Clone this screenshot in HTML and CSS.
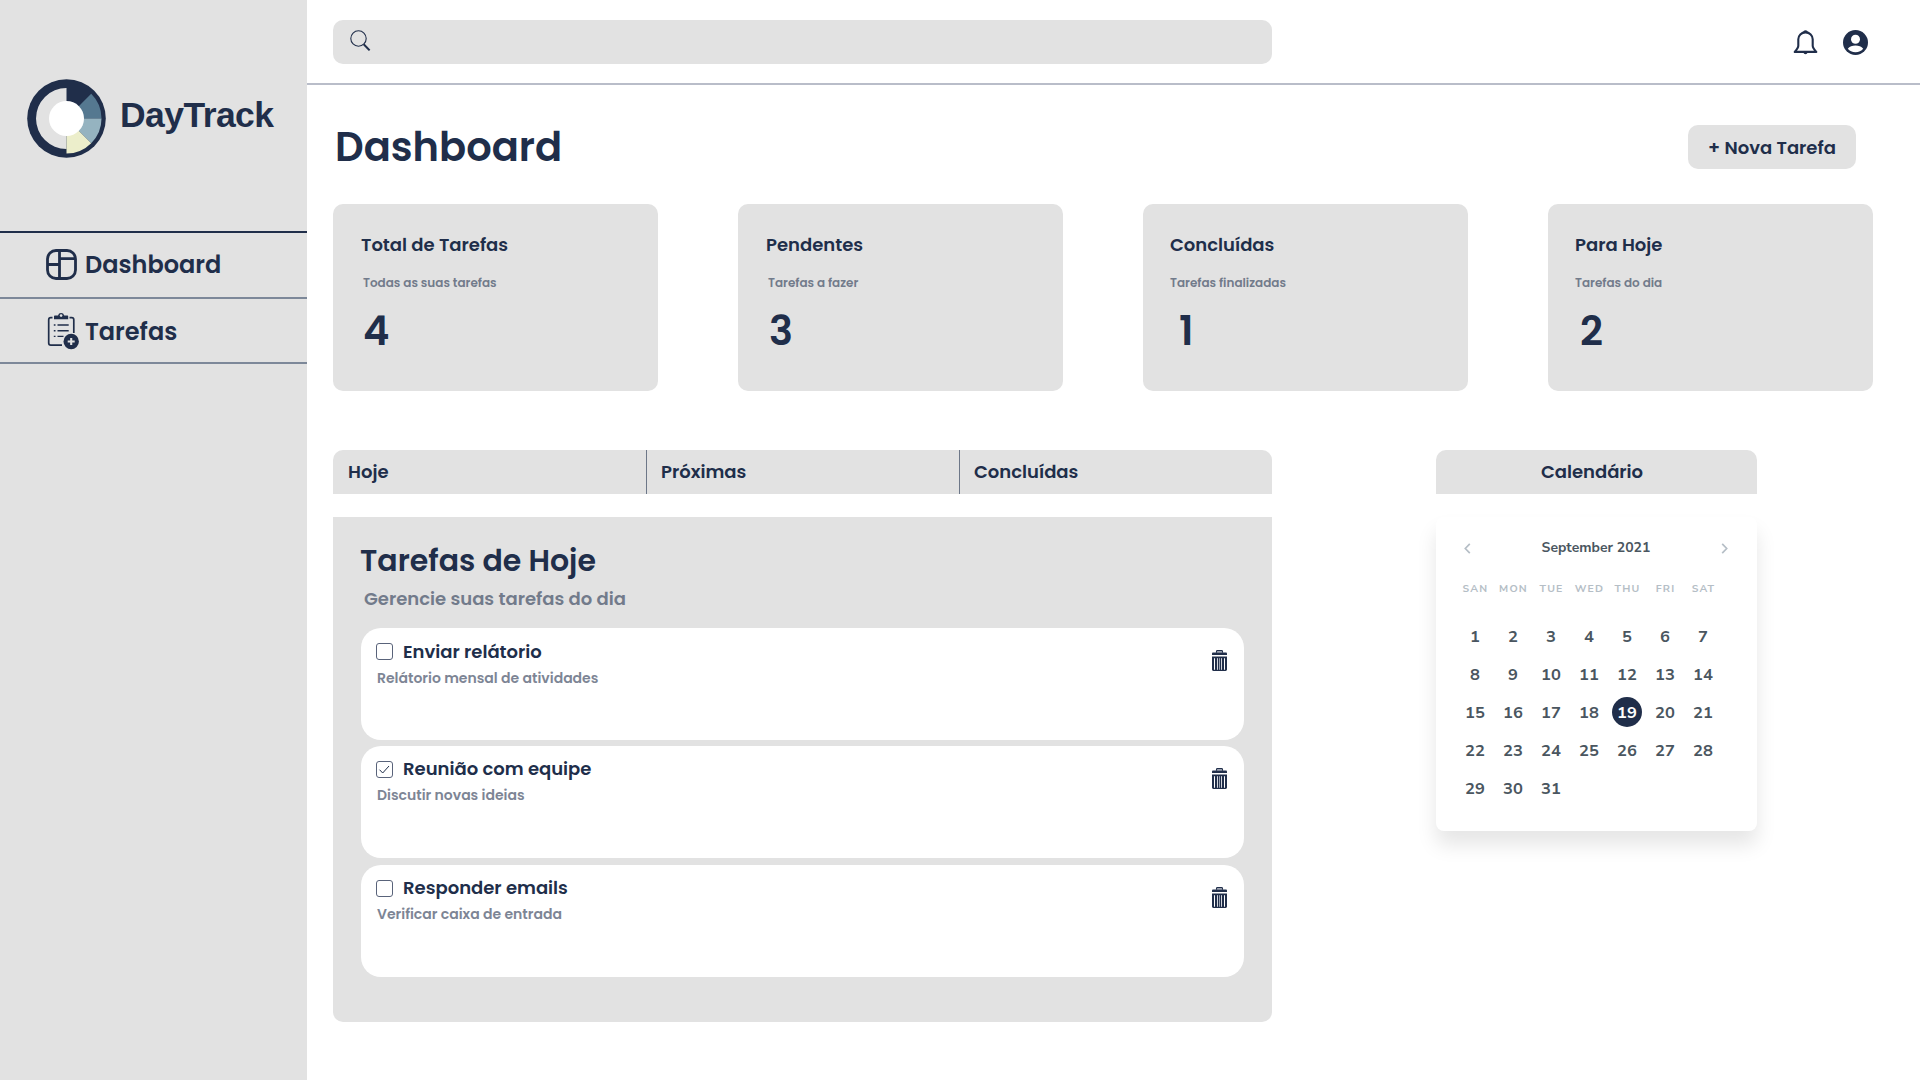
FILE: index.html
```
<!DOCTYPE html>
<html lang="pt-BR">
<head>
<meta charset="utf-8">
<title>DayTrack</title>
<link rel="stylesheet" href="styles.css">
</head>
<body>
<svg class="sprite" aria-hidden="true">
  <symbol id="trash" viewBox="0 0 15 21">
    <path d="M4.500 2.800V1.500c0-.5.4-.9.900-.9h4.200c.5 0 .9.400.9.900v1.300" fill="#c9cdd6" stroke="currentColor" stroke-width="1.100"/>
    <path d="M0 5V3.600c0-.7.500-1.200 1.200-1.200h12.600c.7 0 1.200.5 1.200 1.200V5z" fill="currentColor"/>
    <path fill-rule="evenodd" d="M0 6.500h15V19.600c0 .8-.6 1.400-1.400 1.400H1.400C.6 21 0 20.400 0 19.600zM2 8.200v11.600h1V8.200zM12 8.200v11.600h1V8.200z" fill="currentColor"/>
    <path d="M5.500 8.200v11.600M9.500 8.200v11.600" stroke="#d3d6dd" stroke-width="1"/>
    <path d="M7.500 8.200v11.600" stroke="#9aa1b0" stroke-width="1"/>
  </symbol>
</svg>
<div class="app">
  <aside class="sidebar">
    <div class="brand">
      <svg class="brand-mark" viewBox="-39.500 -39.500 79 79">
        <circle r="39.300" fill="#202e4a"/>
        <path d="M0-30.500A30.500 30.500 0 0 0 0 30.500z" fill="#e2e2e2"/>
        <path d="M0 0 24.700-24.700A35 35 0 0 1 35 0z" fill="#557890"/>
        <path d="M0 0H35A35 35 0 0 1 24.700 24.700z" fill="#95b3c0"/>
        <path d="M0 0 24.700 24.700A35 35 0 0 1 0 35z" fill="#eceecb"/>
        <circle r="17.500" fill="#fff"/>
      </svg>
      <span class="brand-name">DayTrack</span>
    </div>
    <nav class="menu">
      <a class="menu-item">
        <svg class="icon-dashboard" viewBox="0 0 31 31" fill="none" stroke="currentColor" stroke-width="2.800">
          <rect x="1.500" y="1.500" width="28" height="28" rx="8.500"/>
          <path d="M13.500 1.500v28M1.500 15.500h12M13.500 9.700h16"/>
        </svg>
        <span>Dashboard</span>
      </a>
      <a class="menu-item menu-item-tasks">
        <svg class="icon-tasks" viewBox="0 0 32 38" fill="none" stroke="currentColor">
          <path d="M5.500 5.700H3.800C2.600 5.700 1.700 6.600 1.700 7.800V31c0 1.200.9 2.100 2.100 2.100H15M22.500 5.700h2.200c1.200 0 2.100.9 2.100 2.100V21" stroke-width="1.700"/>
          <path d="M7 7.300V4.500c0-.6.5-1 1-1h3a3.200 3.200 0 0 1 6.200 0h3c.6 0 1 .4 1 1v2.800z" fill="currentColor" stroke="none"/>
          <circle cx="14.100" cy="3.600" r="1.300" fill="#e2e2e2" stroke="none"/>
          <path d="M10.500 13h11.200M10.500 18.700h11.200M10.500 24.400h6M6.800 13h1.700M6.800 18.700h1.700M6.800 24.400h1.700" stroke-width="1.400"/>
          <circle cx="24.200" cy="29.500" r="7.700" fill="currentColor" stroke="none"/>
          <path d="M24.200 26v7M20.700 29.500h7" stroke="#e2e2e2" stroke-width="2.100"/>
        </svg>
        <span>Tarefas</span>
      </a>
    </nav>
  </aside>

  <div class="content">
    <header class="topbar">
      <label class="search">
        <svg viewBox="0 0 21 22" fill="none" stroke="currentColor">
          <circle cx="8.500" cy="8.500" r="7.700" stroke-width="1.100"/>
          <path d="M13.700 14.200 19.600 20.400" stroke-width="2"/>
        </svg>
      </label>
      <div class="topbar-actions">
        <svg class="icon-bell" viewBox="0 0 25 25">
          <path d="M12.500 2.400c-4.200 0-7.200 3-7.200 6.900v6.500c0 1.600-1.300 3.600-3.600 6.100h21.600c-2.300-2.500-3.600-4.500-3.600-6.100V9.300c0-3.900-3-6.900-7.200-6.900z" fill="none" stroke="currentColor" stroke-width="2.100" stroke-linejoin="round"/>
          <path d="M10 3a2.500 2.800 0 0 1 5 0zM10.300 22.500a2.300 2.500 0 0 0 4.400 0z" fill="currentColor"/>
        </svg>
        <svg class="icon-user" viewBox="0 0 25 25">
          <circle cx="12.500" cy="12.500" r="12.500" fill="currentColor"/>
          <circle cx="12.500" cy="9.300" r="4.500" fill="#fff"/>
          <path d="M4.800 18.800c1.700-2.200 4.500-3.300 7.700-3.300s6 1.100 7.700 3.300c-1.700 2.200-4.500 3.500-7.700 3.500s-6-1.300-7.700-3.500z" fill="#fff"/>
        </svg>
      </div>
    </header>

    <main class="main">
      <div class="page-head">
        <h1>Dashboard</h1>
        <button class="new-task" type="button">+ Nova Tarefa</button>
      </div>

      <section class="stats">
        <article class="stat">
          <h2>Total de Tarefas</h2>
          <p class="stat-note indent">Todas as suas tarefas</p>
          <p class="stat-value">4</p>
        </article>
        <article class="stat">
          <h2>Pendentes</h2>
          <p class="stat-note indent">Tarefas a fazer</p>
          <p class="stat-value value-three">3</p>
        </article>
        <article class="stat stat-tight">
          <h2>Concluídas</h2>
          <p class="stat-note">Tarefas finalizadas</p>
          <p class="stat-value value-one">1</p>
        </article>
        <article class="stat stat-tight">
          <h2>Para Hoje</h2>
          <p class="stat-note">Tarefas do dia</p>
          <p class="stat-value">2</p>
        </article>
      </section>

      <div class="columns">
        <section class="tasks">
          <div class="tabs">
            <a class="tab">Hoje</a>
            <a class="tab">Próximas</a>
            <a class="tab">Concluídas</a>
          </div>
          <div class="panel">
            <h2>Tarefas de Hoje</h2>
            <p class="panel-note">Gerencie suas tarefas do dia</p>
            <ul class="task-list">
              <li class="task">
                <div class="task-body">
                  <div class="task-title"><span class="checkbox"></span>Enviar relátorio</div>
                  <p>Relátorio mensal de atividades</p>
                </div>
                <svg class="trash"><use href="#trash"/></svg>
              </li>
              <li class="task">
                <div class="task-body">
                  <div class="task-title"><span class="checkbox"><svg viewBox="0 0 15 15"><path d="M2.500 7.700 5.700 11 12 4" fill="none" stroke="currentColor"/></svg></span>Reunião com equipe</div>
                  <p>Discutir novas ideias</p>
                </div>
                <svg class="trash"><use href="#trash"/></svg>
              </li>
              <li class="task task-last">
                <div class="task-body">
                  <div class="task-title"><span class="checkbox"></span>Responder emails</div>
                  <p>Verificar caixa de entrada</p>
                </div>
                <svg class="trash"><use href="#trash"/></svg>
              </li>
            </ul>
          </div>
        </section>

        <section class="calendar">
          <h2>Calendário</h2>
          <div class="calendar-card">
            <div class="calendar-head">
              <svg viewBox="0 0 7 11"><path d="M5.800.8 1.300 5.500 5.800 10.200" fill="none" stroke="currentColor" stroke-width="1.700"/></svg>
              <span>September 2021</span>
              <svg viewBox="0 0 7 11"><path d="M1.200.8 5.700 5.500 1.200 10.200" fill="none" stroke="currentColor" stroke-width="1.700"/></svg>
            </div>
            <div class="weekdays">
              <span>SAN</span><span>MON</span><span>TUE</span><span>WED</span><span>THU</span><span>FRI</span><span>SAT</span>
            </div>
            <div class="days">
              <span>1</span><span>2</span><span>3</span><span>4</span><span>5</span><span>6</span><span>7</span>
              <span>8</span><span>9</span><span>10</span><span>11</span><span>12</span><span>13</span><span>14</span>
              <span>15</span><span>16</span><span>17</span><span>18</span><span class="today">19</span><span>20</span><span>21</span>
              <span>22</span><span>23</span><span>24</span><span>25</span><span>26</span><span>27</span><span>28</span>
              <span>29</span><span>30</span><span>31</span>
            </div>
          </div>
        </section>
      </div>
    </main>
  </div>
</div>
</body>
</html>
```
FILE: styles.css
```
* { box-sizing: border-box; }

body, h1, h2, p, ul { margin: 0; padding: 0; }

body {
  background: #fff;
  color: #202e4a;
  font-family: Poppins, Inter, sans-serif;
  font-size: 18px;
  font-weight: 600;
  overflow: hidden;
}

h1, h2 { font-weight: 600; }
svg { display: block; flex: none; }
ul { list-style: none; }
.sprite { position: absolute; width: 0; height: 0; }

.app { display: flex; width: 1920px; height: 1080px; }

/* Sidebar */
.sidebar { flex: none; width: 307px; background: #e2e2e2; }

.brand {
  display: flex;
  align-items: center;
  gap: 14px;
  height: 231px;
  padding: 6px 0 0 27px;
}
.brand-mark { width: 79px; height: 79px; }
.brand-name {
  padding-bottom: 7px;
  font: 700 35.5px/40px "Liberation Sans", Arial, sans-serif;
  letter-spacing: -0.55px;
}

.menu { border-top: 2px solid #202e4a; }
.menu-item {
  display: flex;
  align-items: center;
  height: 66px;
  padding-left: 46px;
  border-bottom: 2px solid #7d8899;
  font-size: 24px;
}
.menu-item span { padding-bottom: 1px; }
.menu-item-tasks { height: 65px; padding-left: 47px; }
.menu-item-tasks span { padding: 2px 0 0; }
.icon-dashboard { width: 31px; height: 31px; margin: 0 8px 1px 0; }
.icon-tasks { width: 32px; height: 38px; margin-right: 6px; }

/* Top bar */
.content { flex: 1; min-width: 0; }
.topbar {
  display: flex;
  align-items: center;
  justify-content: space-between;
  height: 85px;
  padding: 0 52px 0 26px;
  border-bottom: 2px solid #b9bdc9;
}
.search {
  display: flex;
  align-items: center;
  width: 939px;
  height: 44px;
  margin-top: 1px;
  padding: 0 17px 3px;
  border-radius: 10px;
  background: #e2e2e2;
}
.search svg { width: 21px; height: 22px; }
.topbar-actions { display: flex; gap: 25px; margin-top: 2px; }
.icon-bell, .icon-user { width: 25px; height: 25px; }

/* Page heading */
.main { padding: 40px 47px 0 26px; }
.page-head {
  display: flex;
  align-items: center;
  justify-content: space-between;
  height: 44px;
  padding-right: 17px;
}
.page-head h1 { padding: 0 0 1px 2px; font-size: 40px; line-height: 44px; }
.new-task {
  width: 168px;
  height: 44px;
  padding: 1px 0 0;
  border: 0;
  border-radius: 10px;
  background: #e2e2e2;
  color: inherit;
  font: inherit;
}

/* Summary cards */
.stats { display: grid; grid-template-columns: repeat(4, 1fr); gap: 80px; margin-top: 35px; }
.stat { height: 187px; padding: 28px 0 0 28px; border-radius: 10px; background: #e2e2e2; }
.stat h2 { font-size: 18px; line-height: 26px; }
.stat-note { margin-top: 16px; color: #727b8b; font-size: 12px; line-height: 18px; }
.indent { padding-left: 2px; }
.stat-value { margin-top: 15px; padding-left: 2px; font-size: 40px; line-height: 48px; }
.value-three { padding-left: 3px; }
.stat-tight { padding-left: 27px; }
.stat-tight .stat-value { padding-left: 5px; }
.stat-tight .value-one { padding-left: 9px; }

/* Task column */
.columns { display: flex; gap: 164px; margin-top: 59px; }
.tasks { width: 939px; }
.tabs {
  display: grid;
  grid-template-columns: 314px 313px 1fr;
  height: 44px;
  overflow: hidden;
  border-radius: 10px 10px 0 0;
  background: #e2e2e2;
}
.tab { padding-left: 14px; line-height: 44px; }
.tab:first-child { padding-left: 15px; }
.tab:not(:last-child) { border-right: 1px solid #6d7788; }

.panel {
  height: 505px;
  margin-top: 23px;
  padding: 24px 28px 0;
  border-radius: 0 0 10px 10px;
  background: #e2e2e2;
}
.panel h2 { margin-left: -1px; font-size: 30px; line-height: 40px; }
.panel-note { margin-top: 6px; padding-left: 3px; color: #727b8b; line-height: 24px; }
.task-list { margin-top: 17px; }
.task {
  display: flex;
  justify-content: space-between;
  height: 112px;
  margin-bottom: 6px;
  padding: 11px 17px 0 15px;
  border-radius: 20px;
  background: #fff;
}
.task:first-child { padding-top: 12px; }
.task:first-child .trash { margin-top: 10px; }
.task-last { margin-top: 7px; }
.task-title { display: flex; align-items: center; gap: 10px; line-height: 24px; }
.task:first-child .checkbox { margin-bottom: 1px; }
.task p { margin-top: 5px; padding-left: 1px; color: #7d8595; font-size: 14px; line-height: 19px; }
.checkbox { width: 17px; height: 17px; border: 1px solid #59637a; border-radius: 3px; }
.trash { width: 15px; height: 21px; margin-top: 11px; }

/* Calendar */
.calendar { width: 321px; }
.calendar h2 {
  height: 44px;
  padding-right: 9px;
  border-radius: 10px 10px 0 0;
  background: #e2e2e2;
  font-size: 18px;
  line-height: 44px;
  text-align: center;
}
.calendar-card {
  height: 314px;
  margin-top: 23px;
  padding: 13px 20px 0;
  border-radius: 8px;
  background: #fff;
  box-shadow: 0 14px 20px rgba(0, 0, 0, 0.1);
  color: #4a5660;
  font-family: "Nunito Sans", Lato, sans-serif;
  font-weight: 700;
}
.calendar-head {
  display: flex;
  align-items: center;
  justify-content: space-between;
  height: 34px;
  padding: 0 9px 0 8px;
  font-size: 14px;
}
.calendar-head svg { width: 7px; height: 11px; margin-top: 3px; color: #b5bec6; }
.weekdays, .days { display: grid; grid-template-columns: repeat(7, 38px); text-align: center; }
.weekdays {
  height: 28px;
  margin-top: 11px;
  padding-left: 0.5px;
  color: #b5bec6;
  font-size: 10.5px;
  line-height: 28px;
  letter-spacing: 1.2px;
}
.days { grid-auto-rows: 38px; margin-top: 14px; font-size: 16.5px; line-height: 39px; }
.days .today {
  place-self: center;
  width: 30px;
  height: 30px;
  border-radius: 50%;
  background: #202e4a;
  color: #fff;
  line-height: 31px;
}
```
